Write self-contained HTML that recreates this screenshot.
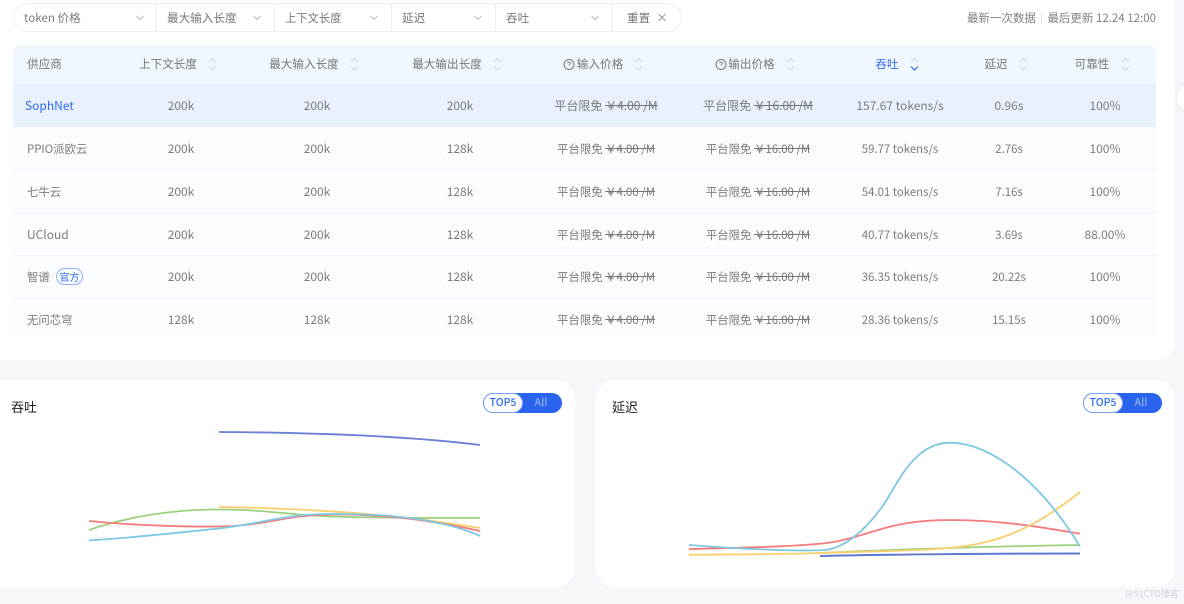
<!DOCTYPE html>
<html><head><meta charset="utf-8">
<style>
html,body{margin:0;padding:0;width:1184px;height:604px;overflow:hidden;background:#f5f7fb;font-family:"Noto Sans CJK SC","Liberation Sans",sans-serif;}
*{box-sizing:border-box}
#w{position:absolute;left:0;top:0;width:1184px;height:604px;overflow:hidden;filter:blur(.3px)}
.a{position:absolute}
.t{position:absolute;transform:translate(-50%,-50%);white-space:nowrap;font-size:12px;color:#7c7c7c;line-height:16px}
.l{position:absolute;transform:translateY(-50%);white-space:nowrap;font-size:12px;color:#7c7c7c;line-height:16px}
.h{color:#777;font-size:11.6px}
.p{font-size:11.4px}
s{text-decoration:line-through;color:#777}
.row{position:absolute;left:13px;width:1143px;background:#fbfcff;border-bottom:1px solid #f3f5fa}
.tg{position:absolute;top:393px;width:40px;height:20px;background:#fff;border:1px solid #7fa2f4;border-radius:10px;color:#2f6bf2;font-size:10.500px;font-weight:500;line-height:18px;text-align:center}
svg{position:absolute;overflow:visible}
</style></head><body><div id="w">
<div class="a" style="left:-20px;top:-20px;width:1195px;height:380px;background:#fff;border-radius:0 0 18px 18px"></div>
<div class="a" style="left:1177px;top:84px;width:30px;height:27px;border-radius:14px;background:#fff;box-shadow:0 0 10px rgba(0,0,0,.07)"></div>

<!-- filter -->
<div class="a" style="left:13px;top:3px;width:669px;height:29px;border:1px solid #eceef2;border-radius:15px"></div>
<div class="a" style="left:156px;top:3px;width:1px;height:29px;background:#eceef2"></div>
<div class="a" style="left:274px;top:3px;width:1px;height:29px;background:#eceef2"></div>
<div class="a" style="left:391px;top:3px;width:1px;height:29px;background:#eceef2"></div>
<div class="a" style="left:495px;top:3px;width:1px;height:29px;background:#eceef2"></div>
<div class="a" style="left:612px;top:3px;width:1px;height:29px;background:#eceef2"></div>
<div class="l" style="left:24px;top:18px;font-size:11.600px">token 价格</div>
<div class="l h" style="left:167px;top:18px">最大输入长度</div>
<div class="l h" style="left:285px;top:18px;font-size:11.300px">上下文长度</div>
<div class="l h" style="left:402px;top:18px">延迟</div>
<div class="l h" style="left:506px;top:18px">吞吐</div>
<div class="l h" style="left:627px;top:18px">重置</div>
<svg style="left:0;top:0" width="1184" height="40" fill="none" stroke="#b8b8b8" stroke-width="1">
<path d="M136.500 16l3.500 3.500 3.500-3.500M253.500 16l3.500 3.500 3.500-3.500M370.500 16l3.500 3.500 3.500-3.500M474.500 16l3.500 3.500 3.500-3.500M591.500 16l3.500 3.500 3.500-3.500"/>
<path d="M658.500 14l7 7M665.500 14l-7 7" stroke="#999"/>
</svg>
<div class="l h" style="right:28px;top:18px;color:#808080;font-size:11.500px">最新一次数据<span style="color:#ccc">｜</span>最后更新 12.24 12:00</div>

<!-- table -->
<div class="a" style="left:13px;top:45px;width:1143px;height:39px;background:#f0f7ff;border-radius:8px 8px 0 0"></div>
<div class="a" style="left:13px;top:84px;width:1143px;height:43px;background:#e9f1fe"></div>
<div class="row" style="top:127px;height:43px"></div>
<div class="row" style="top:170px;height:43px"></div>
<div class="row" style="top:213px;height:43px"></div>
<div class="row" style="top:256px;height:43px"></div>
<div class="row" style="top:299px;height:40px;border:0;border-radius:0 0 8px 8px"></div>

<div class="l h" style="left:27px;top:64px">供应商</div>
<div class="t h" style="left:168px;top:64px">上下文长度</div>
<div class="t h" style="left:304px;top:64px">最大输入长度</div>
<div class="t h" style="left:447px;top:64px">最大输出长度</div>
<div class="t h" style="left:600px;top:64px">输入价格</div>
<div class="t h" style="left:751.500px;top:64px;">输出价格</div>
<div class="t h" style="left:887px;top:64px;color:#2f6bf2">吞吐</div>
<div class="t h" style="left:996px;top:64px">延迟</div>
<div class="t h" style="left:1092px;top:64px">可靠性</div>
<svg style="left:0;top:0" width="1184" height="84" fill="none" stroke="#d0d5dc" stroke-width="1">
<path d="M209 62l3.500-3.500 3.500 3.500M209 66.500l3.500 3.500 3.500-3.500M351 62l3.500-3.500 3.500 3.500M351 66.500l3.500 3.500 3.500-3.500M494 62l3.500-3.500 3.500 3.500M494 66.500l3.500 3.500 3.500-3.500M635 62l3.500-3.500 3.500 3.500M635 66.500l3.500 3.500 3.500-3.500M787 62l3.500-3.500 3.500 3.500M787 66.500l3.500 3.500 3.500-3.500M911 62l3.500-3.500 3.500 3.500M1020 62l3.500-3.500 3.500 3.500M1020 66.500l3.500 3.500 3.500-3.500M1122 62l3.500-3.500 3.500 3.500M1122 66.500l3.500 3.500 3.500-3.500"/>
<path d="M911 66.500l3.500 3.500 3.500-3.500" stroke="#2f6bf2" stroke-width="1.200"/>
<g stroke="#777"><circle cx="569" cy="64.500" r="5"/><circle cx="721" cy="64.500" r="5"/></g>
<path d="M567.500 63.200c.3-1.600 3-1.500 3 .1 0 1-1.500 1-1.500 2.200M719.500 63.200c.3-1.600 3-1.500 3 .1 0 1-1.500 1-1.500 2.200" stroke="#777" stroke-width=".8"/>
</svg>

<!-- row 1 -->
<div class="l" style="left:25px;top:106px;color:#2f6bf2;font-size:12px">SophNet</div>
<div class="t" style="left:181px;top:106px">200k</div><div class="t" style="left:317px;top:106px">200k</div><div class="t" style="left:460px;top:106px">200k</div>
<div class="t" style="left:606px;top:106px">平台限免 <s>￥4.00 /M</s></div><div class="t" style="left:758px;top:106px">平台限免 <s>￥16.00 /M</s></div>
<div class="t" style="left:900px;top:106px">157.67 tokens/s</div><div class="t" style="left:1009px;top:106px">0.96s</div><div class="t" style="left:1105px;top:106px">100%</div>
<!-- row 2 -->
<div class="l p" style="left:27px;top:149px">PPIO派欧云</div>
<div class="t" style="left:181px;top:149px">200k</div><div class="t" style="left:317px;top:149px">200k</div><div class="t" style="left:460px;top:149px">128k</div>
<div class="t p" style="left:606px;top:149px">平台限免 <s>￥4.00 /M</s></div><div class="t p" style="left:758px;top:149px">平台限免 <s>￥16.00 /M</s></div>
<div class="t p" style="left:900px;top:149px">59.77 tokens/s</div><div class="t p" style="left:1009px;top:149px">2.76s</div><div class="t" style="left:1105px;top:149px">100%</div>
<!-- row 3 -->
<div class="l p" style="left:27px;top:192px">七牛云</div>
<div class="t" style="left:181px;top:192px">200k</div><div class="t" style="left:317px;top:192px">200k</div><div class="t" style="left:460px;top:192px">128k</div>
<div class="t p" style="left:606px;top:192px">平台限免 <s>￥4.00 /M</s></div><div class="t p" style="left:758px;top:192px">平台限免 <s>￥16.00 /M</s></div>
<div class="t p" style="left:900px;top:192px">54.01 tokens/s</div><div class="t p" style="left:1009px;top:192px">7.16s</div><div class="t" style="left:1105px;top:192px">100%</div>
<!-- row 4 -->
<div class="l" style="left:27px;top:235px">UCloud</div>
<div class="t" style="left:181px;top:235px">200k</div><div class="t" style="left:317px;top:235px">200k</div><div class="t" style="left:460px;top:235px">128k</div>
<div class="t p" style="left:606px;top:235px">平台限免 <s>￥4.00 /M</s></div><div class="t p" style="left:758px;top:235px">平台限免 <s>￥16.00 /M</s></div>
<div class="t p" style="left:900px;top:235px">40.77 tokens/s</div><div class="t p" style="left:1009px;top:235px">3.69s</div><div class="t" style="left:1105px;top:235px">88.00%</div>
<!-- row 5 -->
<div class="l p" style="left:27px;top:277px">智谱</div>
<div class="a" style="left:56px;top:268px;width:27px;height:17px;border:1px solid #8fb0f5;border-radius:9px;color:#2f6bf2;font-size:10px;line-height:15px;text-align:center">官方</div>
<div class="t" style="left:181px;top:277px">200k</div><div class="t" style="left:317px;top:277px">200k</div><div class="t" style="left:460px;top:277px">128k</div>
<div class="t p" style="left:606px;top:277px">平台限免 <s>￥4.00 /M</s></div><div class="t p" style="left:758px;top:277px">平台限免 <s>￥16.00 /M</s></div>
<div class="t p" style="left:900px;top:277px">36.35 tokens/s</div><div class="t p" style="left:1009px;top:277px">20.22s</div><div class="t" style="left:1105px;top:277px">100%</div>
<!-- row 6 -->
<div class="l p" style="left:27px;top:320px">无问芯穹</div>
<div class="t" style="left:181px;top:320px">128k</div><div class="t" style="left:317px;top:320px">128k</div><div class="t" style="left:460px;top:320px">128k</div>
<div class="t p" style="left:606px;top:320px">平台限免 <s>￥4.00 /M</s></div><div class="t p" style="left:758px;top:320px">平台限免 <s>￥16.00 /M</s></div>
<div class="t p" style="left:900px;top:320px">28.36 tokens/s</div><div class="t p" style="left:1009px;top:320px">15.15s</div><div class="t" style="left:1105px;top:320px">100%</div>

<!-- chart cards -->
<div class="a" style="left:-20px;top:380px;width:595px;height:207px;background:#fff;border-radius:20px"></div>
<div class="a" style="left:595px;top:380px;width:580px;height:207px;background:#fff;border-radius:20px"></div>
<div class="l" style="left:11px;top:407px;color:#222;font-size:13px">吞吐</div>
<div class="l" style="left:612px;top:407px;color:#222;font-size:13px">延迟</div>

<div class="a" style="left:483px;top:393px;width:79px;height:20px;background:#2a64ee;border-radius:10px"></div>
<div class="tg" style="left:483px">TOP5</div>
<div class="t" style="left:541px;top:403px;color:#8fb0f8;font-size:10.500px;font-weight:500">All</div>
<div class="a" style="left:1083px;top:393px;width:79px;height:20px;background:#2a64ee;border-radius:10px"></div>
<div class="tg" style="left:1083px">TOP5</div>
<div class="t" style="left:1141px;top:403px;color:#8fb0f8;font-size:10.500px;font-weight:500">All</div>

<svg style="left:0;top:0" width="1184" height="604" fill="none" stroke-width="1.800">
<!-- left chart -->
<path d="M219 432C300 432.500 400 435 480 445" stroke="#6a7fd6"/>
<path d="M219 507C290 508 350 512 400 517C430 520 455 524 480 528" stroke="#f9cf6c"/>
<path d="M89 530C130 516 175 509.500 219 509.500C265 509.500 290 515 330 516.500C380 518 430 518 480 518" stroke="#9dd07f"/>
<path d="M89 521C130 525 180 527 219 526.500C265 526 285 515 330 514.500C385 514 430 520 480 531" stroke="#f47c7c"/>
<path d="M89 540.500C135 537.500 175 533 219 528.500C265 523 285 514 330 514C385 513.500 440 518 480 536" stroke="#7ec8e3"/>
<!-- right chart -->
<path d="M820 553C880 550 1000 546 1080 545" stroke="#9dd07f"/>
<path d="M820 556C880 554.500 1000 553.500 1080 553.500" stroke="#5f78d0" stroke-width="2"/>
<path d="M689 549C730 548 790 547 827 543C870 537 885 520 950 520C1000 520 1040 527 1080 533.700" stroke="#f47c7c"/>
<path d="M689 554.700C730 554.500 790 554 820 553C880 551 930 551 965 546C1010 540 1045 520 1080 492" stroke="#f9cf6c"/>
<path d="M689 545C730 548 790 552 825 550C845 548 865 530 882 507C896 488 912 442.700 950 442.700C990 443 1040 480 1080 546.700" stroke="#7ec8e3"/>
</svg>
<div class="a" style="right:5px;top:588px;font-size:9px;line-height:12px;color:#cfd2d8;white-space:nowrap">@51CTO博客</div>
</div></body></html>
